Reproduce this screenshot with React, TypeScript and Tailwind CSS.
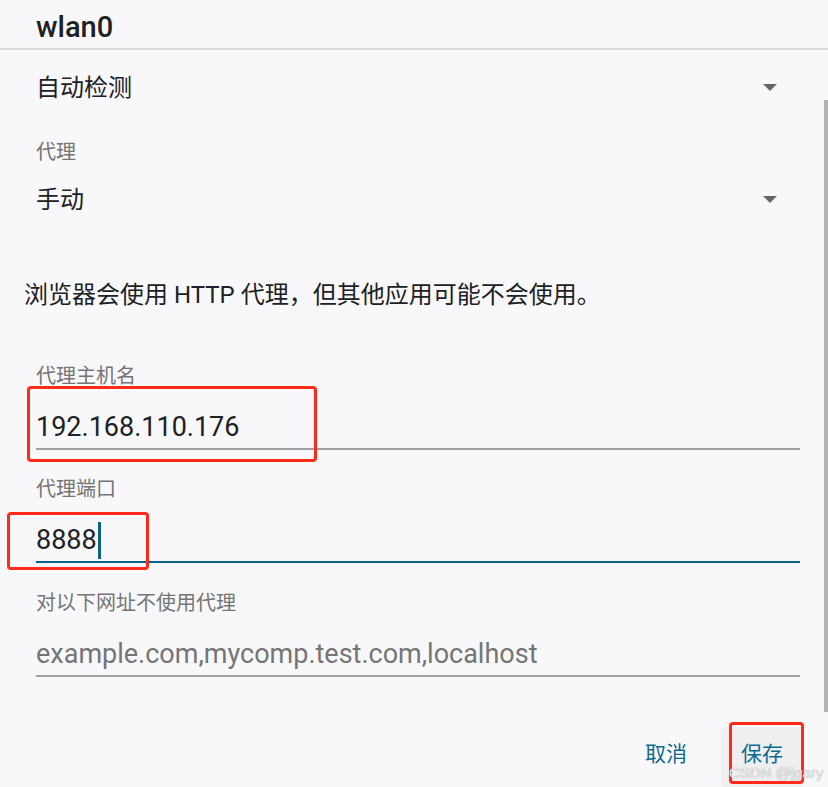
import React from "react";

// --- Proxy settings dialog (Android style) ---

const Caret: React.FC = () => (
    <svg width="14" height="8" viewBox="0 0 14 8" className="shrink-0">
        <path d="M0 0 L14 0 L7 7 Z" fill="#666666" />
    </svg>
);

interface FieldProps {
    label: string;
    value?: string;
    placeholder?: string;
    focused?: boolean;
    mt: string;
}

const Field: React.FC<FieldProps> = ({ label, value, placeholder, focused, mt }) => (
    <div className={`${mt} px-9 pr-7`}>
        <div className="h-[40px] flex items-center text-[20px] text-[#757575]">{label}</div>
        <div
            className={`h-[54px] pt-[10px] flex items-center border-b-2 text-[27px] ${
                focused ? "border-[#0b6186]" : "border-[#a0a0a0]"
            }`}
        >
            {value ? (
                <span className="text-[#202124]">{value}</span>
            ) : (
                <span className="text-[#757575]">{placeholder}</span>
            )}
            {focused && <span className="ml-[1px] w-[3px] h-[37px] bg-[#0b6186]" />}
        </div>
    </div>
);

const App: React.FC = () => {
    return (
        <div
            className="relative w-[828px] h-[787px] overflow-hidden bg-[#f8f8fa] text-[#202124]"
            style={{ fontFamily: '"Roboto", "Noto Sans CJK SC", sans-serif' }}
        >
            {/* Header */}
            <div className="h-[50px] pt-2 pl-9 flex items-center border-b-2 border-[#dcdcdf] text-[29px] font-medium">
                wlan0
            </div>

            {/* IP settings select */}
            <div className="h-[76px] pl-9 pr-[51px] flex items-center justify-between text-[24px]">
                <span>自动检测</span>
                <Caret />
            </div>

            {/* Proxy select */}
            <div className="h-[52px] pl-9 flex items-center text-[20px] text-[#757575]">代理</div>
            <div className="h-[44px] pl-9 pr-[51px] flex items-center justify-between text-[24px]">
                <span>手动</span>
                <Caret />
            </div>

            {/* Info */}
            <div className="mt-[48px] h-[50px] pl-6 flex items-center text-[24px]">
                浏览器会使用 HTTP 代理，但其他应用可能不会使用。
            </div>

            <Field mt="mt-[36px]" label="代理主机名" value="192.168.110.176" />
            <Field mt="mt-[19px]" label="代理端口" value="8888" focused />
            <Field mt="mt-[20px]" label="对以下网址不使用代理" placeholder="example.com,mycomp.test.com,localhost" />

            {/* Actions */}
            <div className="mt-[50px] pr-[25px] flex justify-end gap-[14px] text-[21px] text-[#0e6a8c]">
                <button className="h-[60px] pb-1 px-5 flex items-center rounded">取消</button>
                <button className="h-[60px] pb-1 px-5 flex items-center rounded bg-[#efeff1]">保存</button>
            </div>

            {/* Scrollbar */}
            <div className="absolute right-0 top-[100px] w-[4px] h-[612px] bg-[#b3b3b3]" />

            {/* Annotation boxes */}
            <div className="absolute left-[27px] top-[386px] w-[290px] h-[76px] border-[3px] border-[#fe2a1c] rounded-[4px]" />
            <div className="absolute left-[7px] top-[512px] w-[142px] h-[58px] border-[3px] border-[#fe2a1c] rounded-[4px]" />
            <div className="absolute left-[729px] top-[722px] w-[75px] h-[62px] border-[3px] border-[#fe2a1c] rounded-[4px]" />

            {/* Watermark */}
            <div
                className="absolute left-[729px] top-[765px] whitespace-nowrap text-[15px] leading-none text-[#ececec]"
                style={{ fontFamily: '"Liberation Sans", sans-serif', textShadow: "0 0 1px #8a8a8a" }}
            >
                CSDN @jgary
            </div>
        </div>
    );
};

export default App;
